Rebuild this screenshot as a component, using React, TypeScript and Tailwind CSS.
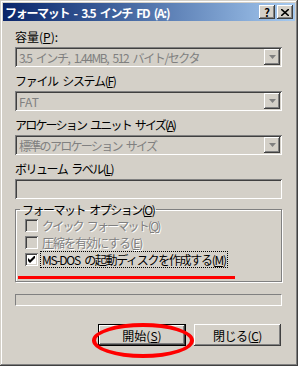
import React from 'react';

const raised =
  'shadow-[inset_-1px_-1px_#404040,inset_1px_1px_#ffffff,inset_-2px_-2px_#808080,inset_2px_2px_#d4d0c8]';
const sunken =
  'shadow-[inset_1px_1px_#808080,inset_-1px_-1px_#ffffff,inset_2px_2px_#404040,inset_-2px_-2px_#d4d0c8]';

const Key = ({ k }: { k: string }) => (
  <>
    (<span className="underline underline-offset-[1px]">{k}</span>)
  </>
);

const Combo = ({ value, track }: { value: string; track: string }) => (
  <div className={`h-[20px] bg-[#d4d0c8] ${sunken} flex items-center pl-[4px] pr-[2px]`}>
    <span className={`flex-1 text-[#808080] whitespace-nowrap overflow-hidden ${track}`}>{value}</span>
    <div className={`w-[16px] h-[16px] bg-[#d4d0c8] ${raised} flex items-center justify-center`}>
      <svg width="7" height="4" viewBox="0 0 7 4">
        <path d="M0 0h7L3.5 4z" fill="#808080" />
      </svg>
    </div>
  </div>
);

const Check = ({ checked, disabled }: { checked?: boolean; disabled?: boolean }) => (
  <div
    className={`w-[13px] h-[13px] shrink-0 ${disabled ? 'bg-[#d4d0c8]' : 'bg-white'} ${sunken} flex items-center justify-center`}
  >
    {checked && (
      <svg width="7" height="7" viewBox="0 0 7 7">
        <path d="M0 2v3l2 2 5-5V-1L2 4z" fill="#000" />
      </svg>
    )}
  </div>
);

const TitleBtn = ({ children }: { children: React.ReactNode }) => (
  <div
    className={`w-[16px] h-[14px] bg-[#d4d0c8] ${raised} flex items-center justify-center text-black font-bold text-[11px] leading-none`}
  >
    {children}
  </div>
);

export default function App() {
  return (
    <div
      className="relative w-[298px] h-[366px] bg-[#d4d0c8] p-[3px] flex flex-col text-[12px] leading-[15px] [word-spacing:3px] text-black shadow-[inset_-1px_-1px_#404040,inset_1px_1px_#d4d0c8,inset_-2px_-2px_#808080,inset_2px_2px_#ffffff]"
      style={{ fontFamily: '"Noto Sans CJK JP", "Liberation Sans", sans-serif' }}
    >
      {/* title bar */}
      <div className="h-[18px] bg-gradient-to-r from-[#0a246a] to-[#a6caf0] flex items-center pl-[2px] pr-[2px]">
        <span className="flex-1 text-white font-bold text-[12px] whitespace-nowrap tracking-[-1.3px]">
          フォーマット - 3.5 インチ FD (A:)
        </span>
        <div className="flex gap-[2px]">
          <TitleBtn>?</TitleBtn>
          <TitleBtn>
            <svg width="8" height="7" viewBox="0 0 8 7">
              <path d="M0 0l8 7M8 0L0 7" stroke="#000" strokeWidth="1.6" />
            </svg>
          </TitleBtn>
        </div>
      </div>

      <div className="flex flex-col pl-[12px] pr-[13px]">
        <div className="mt-[8px] mb-[3px]">
          容量<Key k="P" />:
        </div>
        <Combo value="3.5 インチ, 1.44MB, 512 バイト/セクタ" track="tracking-[-1.4px]" />

        <div className="mt-[6px] mb-[3px] tracking-[-1.3px]">
          ファイル システム<Key k="F" />
        </div>
        <Combo value="FAT" track="tracking-normal" />

        <div className="mt-[6px] mb-[3px] tracking-[-1.8px]">
          アロケーション ユニット サイズ<Key k="A" />
        </div>
        <Combo value="標準のアロケーション サイズ" track="tracking-[-1.7px]" />

        <div className="mt-[6px] mb-[3px] tracking-[-1.5px]">
          ボリューム ラベル<Key k="L" />
        </div>
        <div className={`h-[20px] bg-[#d4d0c8] ${sunken}`} />

        <fieldset className="mt-[3px] border border-[#808080] shadow-[inset_1px_1px_#ffffff,1px_1px_#ffffff] pl-[9px] pb-[15px] pt-[2px] flex flex-col gap-[4px]">
          <legend className="-ml-[5px] px-[2px] tracking-[-1.5px]">
            フォーマット オプション<Key k="O" />
          </legend>
          <div className="flex items-center gap-[4px] h-[13px] text-[#808080] [text-shadow:1px_1px_0_#ffffff]">
            <Check disabled />
            <span className="tracking-[-1.8px]">
              クイック フォーマット<Key k="Q" />
            </span>
          </div>
          <div className="flex items-center gap-[4px] h-[13px] text-[#808080] [text-shadow:1px_1px_0_#ffffff]">
            <Check disabled />
            <span className="tracking-[-1px]">
              圧縮を有効にする<Key k="E" />
            </span>
          </div>
          <div className="flex items-center gap-[3px] h-[13px]">
            <Check checked />
            <span className="outline-1 outline-dotted outline-black px-[1px] tracking-[-1.3px]">
              MS-DOS の起動ディスクを作成する<Key k="M" />
            </span>
          </div>
        </fieldset>

        <div className="mt-[12px] h-[12px] border border-t-[#808080] border-l-[#808080] border-b-white border-r-white" />

        <div className="mt-[18px] flex justify-end gap-[8px] pr-[1px]">
          <div className="w-[88px] h-[22px] border border-black">
            <div className={`w-full h-full ${raised} flex items-center justify-center`}>
              開始<Key k="S" />
            </div>
          </div>
          <div className={`w-[87px] h-[22px] ${raised} flex items-center justify-center tracking-[-0.5px]`}>
            閉じる<Key k="C" />
          </div>
        </div>
      </div>

      {/* red annotations */}
      <div className="absolute left-[18px] top-[276px] w-[217px] h-[3px] bg-[#ff0000]" />
      <div className="absolute left-[92px] top-[323px] w-[102px] h-[35px] rounded-[50%] border-4 border-[#ff0000]" />
    </div>
  );
}
